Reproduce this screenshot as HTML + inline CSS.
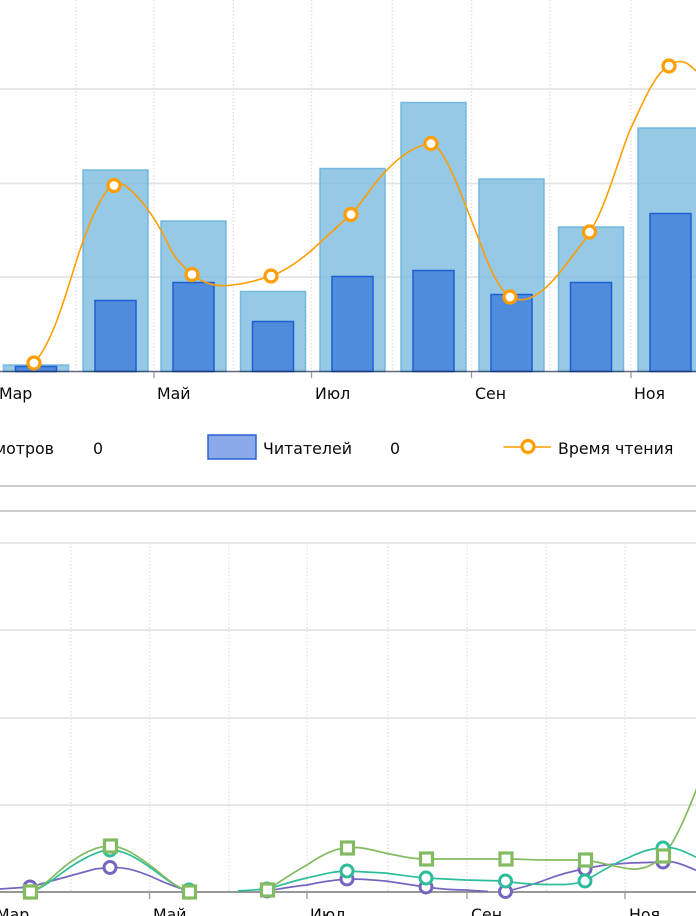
<!DOCTYPE html>
<html lang="ru"><head><meta charset="utf-8"><title>Chart</title>
<style>
html,body{margin:0;padding:0;background:#fff;width:696px;height:916px;overflow:hidden}
svg{display:block}
text{font-family:"DejaVu Sans",sans-serif;font-size:15.8px;fill:#0a0a0a}
.g{stroke:#e4e4e4;stroke-width:1.7;fill:none}
.v{stroke:#e0e0e0;stroke-width:1.4;stroke-dasharray:1.5 2;fill:none}
.t{stroke:#999;stroke-width:1.3;fill:none}
.b{fill:#7bbce0;fill-opacity:.8;stroke:#6cb4de;stroke-opacity:.9;stroke-width:1.5}
.d{fill:#4f8cdd;stroke:#1f5fd0;stroke-width:1.5}
.m{fill:#fff;stroke:#ff9e01;stroke-width:3.2}
.p{fill:#fff;stroke:#7565c0;stroke-width:3}
.e{fill:#fff;stroke:#2dbd9b;stroke-width:3}
.s{fill:#fff;stroke:#84bb62;stroke-width:3.2}
</style></head><body>
<svg width="696" height="916" viewBox="0 0 696 916" xmlns="http://www.w3.org/2000/svg">
<!-- chart 1 grid -->
<path class="v" d="M76 0V371M154 0V371M233.300 0V371M311.500 0V371M392.300 0V371M471.500 0V371M549.700 0V371M631 0V371"/>
<path class="g" d="M0 89H696M0 183.500H696M0 277H696"/>
<!-- bars -->
<rect class="b" x="3.500" y="365" width="65" height="6.500"/>
<rect class="b" x="83" y="170" width="65" height="201.500"/>
<rect class="b" x="161" y="221" width="65" height="150.500"/>
<rect class="b" x="240.500" y="291.500" width="65" height="80"/>
<rect class="b" x="320" y="168.500" width="65" height="203"/>
<rect class="b" x="401" y="102.500" width="65" height="269"/>
<rect class="b" x="479" y="179" width="65" height="192.500"/>
<rect class="b" x="558.500" y="227" width="65" height="144.500"/>
<rect class="b" x="638" y="128" width="65" height="243.500"/>
<rect class="d" x="15.500" y="366.500" width="41" height="5"/>
<rect class="d" x="95" y="300.500" width="41" height="71"/>
<rect class="d" x="173" y="282.500" width="41" height="89"/>
<rect class="d" x="252.500" y="321.500" width="41" height="50"/>
<rect class="d" x="332" y="276.500" width="41" height="95"/>
<rect class="d" x="413" y="270.500" width="41" height="101"/>
<rect class="d" x="491" y="294.500" width="41" height="77"/>
<rect class="d" x="570.500" y="282.500" width="41" height="89"/>
<rect class="d" x="650" y="213.500" width="41" height="158"/>
<path d="M0 371.500H696" stroke="#1c2a50" stroke-opacity=".7" stroke-width="1.600" fill="none"/>
<path class="t" d="M154 372V378M311.500 372V378M471.500 372V378M631 372V378"/>
<!-- line -->
<path d="M34 363C55 340 68 285 80 250C92 215 105 187 114 185.500C118 183 122 183 127 187C143 200 158 222 171 250C177 261 185 268 192 274.500C205 285 220 287 232 285C245 284 258 280 271 276C285 271 298 262 312 250C325 238 338 226 351 214.500C362 203 372 185 385 172C400 156 415 145 431 143.500C445 145 465 205 483 250C490 270 500 290 510 297C515 300 520 300 525 299.500C545 295 562 270 577 250C582 244 586 238 589.500 232C605 210 618 160 630 130C642 105 655 72 669 66C675 61 682 60 688 64L700 74" fill="none" stroke="#ff9e01" stroke-width="1.600"/>
<circle class="m" cx="34" cy="363" r="6"/>
<circle class="m" cx="114" cy="185.500" r="6"/>
<circle class="m" cx="192" cy="274.500" r="6"/>
<circle class="m" cx="271" cy="276" r="6"/>
<circle class="m" cx="351" cy="214.500" r="6"/>
<circle class="m" cx="431" cy="143.500" r="6"/>
<circle class="m" cx="510" cy="297" r="6"/>
<circle class="m" cx="589.500" cy="232" r="6"/>
<circle class="m" cx="669" cy="66" r="6"/>
<!-- labels -->
<text x="-1" y="399">Мар</text>
<text x="157" y="399">Май</text>
<text x="315" y="399">Июл</text>
<text x="475" y="399">Сен</text>
<text x="634" y="399">Ноя</text>
<!-- legend -->
<text x="54" y="454" text-anchor="end">Просмотров</text>
<text x="93" y="454">0</text>
<rect x="208" y="435" width="48" height="24" fill="#8aa9e8" stroke="#2a62d2" stroke-width="1.500"/>
<text x="263" y="454">Читателей</text>
<text x="390" y="454">0</text>
<path d="M503.500 447H551" stroke="#ff9e01" stroke-width="1.500" fill="none"/>
<circle class="m" cx="528" cy="446.500" r="6"/>
<text x="558" y="454">Время чтения</text>
<!-- separators -->
<path d="M0 486H696M0 511H696" stroke="#c8c8c8" stroke-width="1.800" fill="none"/>
<!-- chart 2 grid -->
<path class="v" d="M71 543V892M149.500 543V892M229 543V892M307 543V892M388 543V892M467 543V892M546.500 543V892M625 543V892"/>
<path class="g" d="M0 543H696M0 630H696M0 718H696M0 805H696"/>
<path d="M0 892H696" stroke="#777" stroke-width="1.600" fill="none"/>
<path class="t" d="M149.500 892V899M307 892V899M467 892V899M625 892V899"/>
<!-- series -->
<path d="M0 889L30 887L55 880L95 869L110 867.500C125 867 135 870 150 876C165 883 178 888 189 891M267 891C285 888 295 886 307 885C320 882 335 880 347 879C360 879 375 880 385 881C400 883 412 885 426 887C440 889 452 890 465 890L488 891.500M505.500 891.500C520 888 535 884 545 880C558 875 572 871 585 869C600 865 615 864 630 863L663 862C672 860 682 864 700 872" fill="none" stroke="#7565c0" stroke-width="1.700"/>
<path d="M30 892C45 888 60 873 75 864C88 856 100 850 110 850C125 850 140 860 155 871C168 881 178 888 189 891M238 891L267 889C280 886 292 881 307 878C320 875 335 871 347 871L385 873C400 875 412 877 426 878L465 880L505.500 881C515 883 525 884 545 884.500L565 884.500C572 884 580 883 585 881C600 872 615 863 630 857C642 851 652 848 663 848C675 846 685 852 700 859" fill="none" stroke="#2dbd9b" stroke-width="1.700"/>
<path d="M30 892C45 887 58 870 72 861C85 852 98 846 110 846C125 846 140 858 155 869C168 880 178 888 189 892M267 890C280 882 292 873 307 865C320 856 335 848 347 848C360 846 372 850 385 853C400 856 412 859 426 859H505.500C520 859 535 860 545 860H585C600 862 615 867 631 869C645 870 655 864 663 856C672 846 685 820 700 780" fill="none" stroke="#84bb62" stroke-width="1.700"/>
<circle class="p" cx="30" cy="887" r="6"/><circle class="p" cx="110" cy="867.500" r="6"/><circle class="p" cx="189" cy="891" r="6"/><circle class="p" cx="267" cy="891" r="6"/><circle class="p" cx="347" cy="879" r="6"/><circle class="p" cx="426" cy="887" r="6"/><circle class="p" cx="505.500" cy="891.500" r="6"/><circle class="p" cx="585" cy="869" r="6"/><circle class="p" cx="663" cy="862" r="6"/>
<circle class="e" cx="30" cy="892" r="6"/><circle class="e" cx="110" cy="850" r="6"/><circle class="e" cx="189" cy="890" r="6"/><circle class="e" cx="267" cy="889" r="6"/><circle class="e" cx="347" cy="871" r="6"/><circle class="e" cx="426" cy="878" r="6"/><circle class="e" cx="505.500" cy="881" r="6"/><circle class="e" cx="585" cy="881" r="6"/><circle class="e" cx="663" cy="848" r="6"/>
<rect class="s" x="24.500" y="886" width="12" height="12"/><rect class="s" x="104.500" y="840" width="12" height="12"/><rect class="s" x="183.500" y="886" width="12" height="12"/><rect class="s" x="261.500" y="884" width="12" height="12"/><rect class="s" x="341.500" y="842" width="12" height="12"/><rect class="s" x="420.500" y="853" width="12" height="12"/><rect class="s" x="500" y="853" width="12" height="12"/><rect class="s" x="579.500" y="854" width="12" height="12"/><rect class="s" x="657.500" y="850" width="12" height="12"/>
<text x="-4" y="920">Мар</text>
<text x="153" y="920">Май</text>
<text x="310" y="920">Июл</text>
<text x="471" y="920">Сен</text>
<text x="629" y="920">Ноя</text>
</svg>
</body></html>
